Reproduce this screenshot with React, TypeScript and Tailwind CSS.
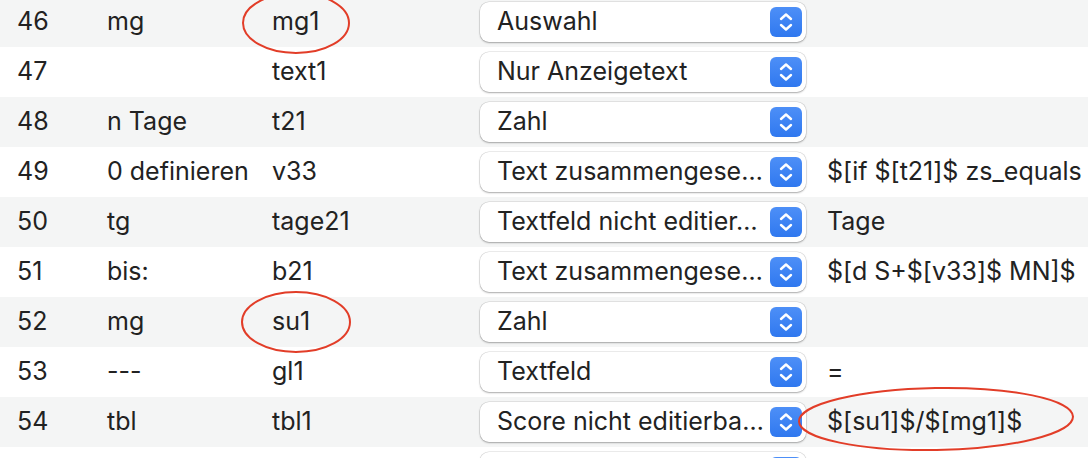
import React from "react";

type Row = { n: string; name: string; v: string; sel: string; extra: string };

const rows: Row[] = [
  { n: "46", name: "mg", v: "mg1", sel: "Auswahl", extra: "" },
  { n: "47", name: "", v: "text1", sel: "Nur Anzeigetext", extra: "" },
  { n: "48", name: "n Tage", v: "t21", sel: "Zahl", extra: "" },
  { n: "49", name: "0 definieren", v: "v33", sel: "Text zusammengese…", extra: "$[if $[t21]$ zs_equals" },
  { n: "50", name: "tg", v: "tage21", sel: "Textfeld nicht editier…", extra: "Tage" },
  { n: "51", name: "bis:", v: "b21", sel: "Text zusammengese…", extra: "$[d S+$[v33]$ MN]$" },
  { n: "52", name: "mg", v: "su1", sel: "Zahl", extra: "" },
  { n: "53", name: "---", v: "gl1", sel: "Textfeld", extra: "=" },
  { n: "54", name: "tbl", v: "tbl1", sel: "Score nicht editierba…", extra: "$[su1]$/$[mg1]$" },
  { n: "", name: "", v: "", sel: "", extra: "" },
];

function Stepper() {
  return (
    <div className="w-[32px] h-[30px] rounded-[6px] bg-gradient-to-b from-[#4d8ff7] to-[#2f78ef] flex items-center justify-center shrink-0">
      <svg width="16" height="22" viewBox="0 0 16 22" fill="none" stroke="white" strokeWidth="2.4" strokeLinecap="round" strokeLinejoin="round">
        <path d="M3 8 L8 3.5 L13 8" />
        <path d="M3 14 L8 18.5 L13 14" />
      </svg>
    </div>
  );
}

export default function App() {
  return (
    <div
      className="relative w-[1088px] h-[458px] overflow-hidden bg-white text-[#222222] text-[25px]"
      style={{ fontFamily: "Inter, 'Noto Sans', sans-serif" }}
    >
      <div className="-mt-[3px] flex flex-col">
        {rows.map((r, i) => (
          <div
            key={i}
            className={`flex items-center h-[50px] shrink-0 whitespace-nowrap ${i % 2 === 0 ? "bg-[#f4f5f5]" : "bg-white"}`}
          >
            <div className="w-[107px] pl-[17px] shrink-0">{r.n}</div>
            <div className="w-[165px] shrink-0">{r.name}</div>
            <div className="w-[208px] shrink-0">{r.v}</div>
            <div className="w-[326px] h-[40px] shrink-0 rounded-[9px] bg-white shadow-[0_0_0_0.5px_rgba(0,0,0,0.14),0_1px_2px_rgba(0,0,0,0.28)] flex items-center justify-between pl-[17px] pr-[4px]">
              <span className="truncate pr-[6px]">{r.sel}</span>
              <Stepper />
            </div>
            <div className="pl-[21px] overflow-hidden">{r.extra}</div>
          </div>
        ))}
      </div>
      <svg className="absolute inset-0 pointer-events-none" width="1088" height="458" viewBox="0 0 1088 458" fill="none" stroke="#e23d28" strokeWidth="2">
        <ellipse cx="296" cy="23" rx="53" ry="30" />
        <ellipse cx="296" cy="322" rx="54" ry="30" />
        <ellipse cx="936" cy="419" rx="137" ry="31" transform="rotate(-1 936 419)" />
      </svg>
    </div>
  );
}
